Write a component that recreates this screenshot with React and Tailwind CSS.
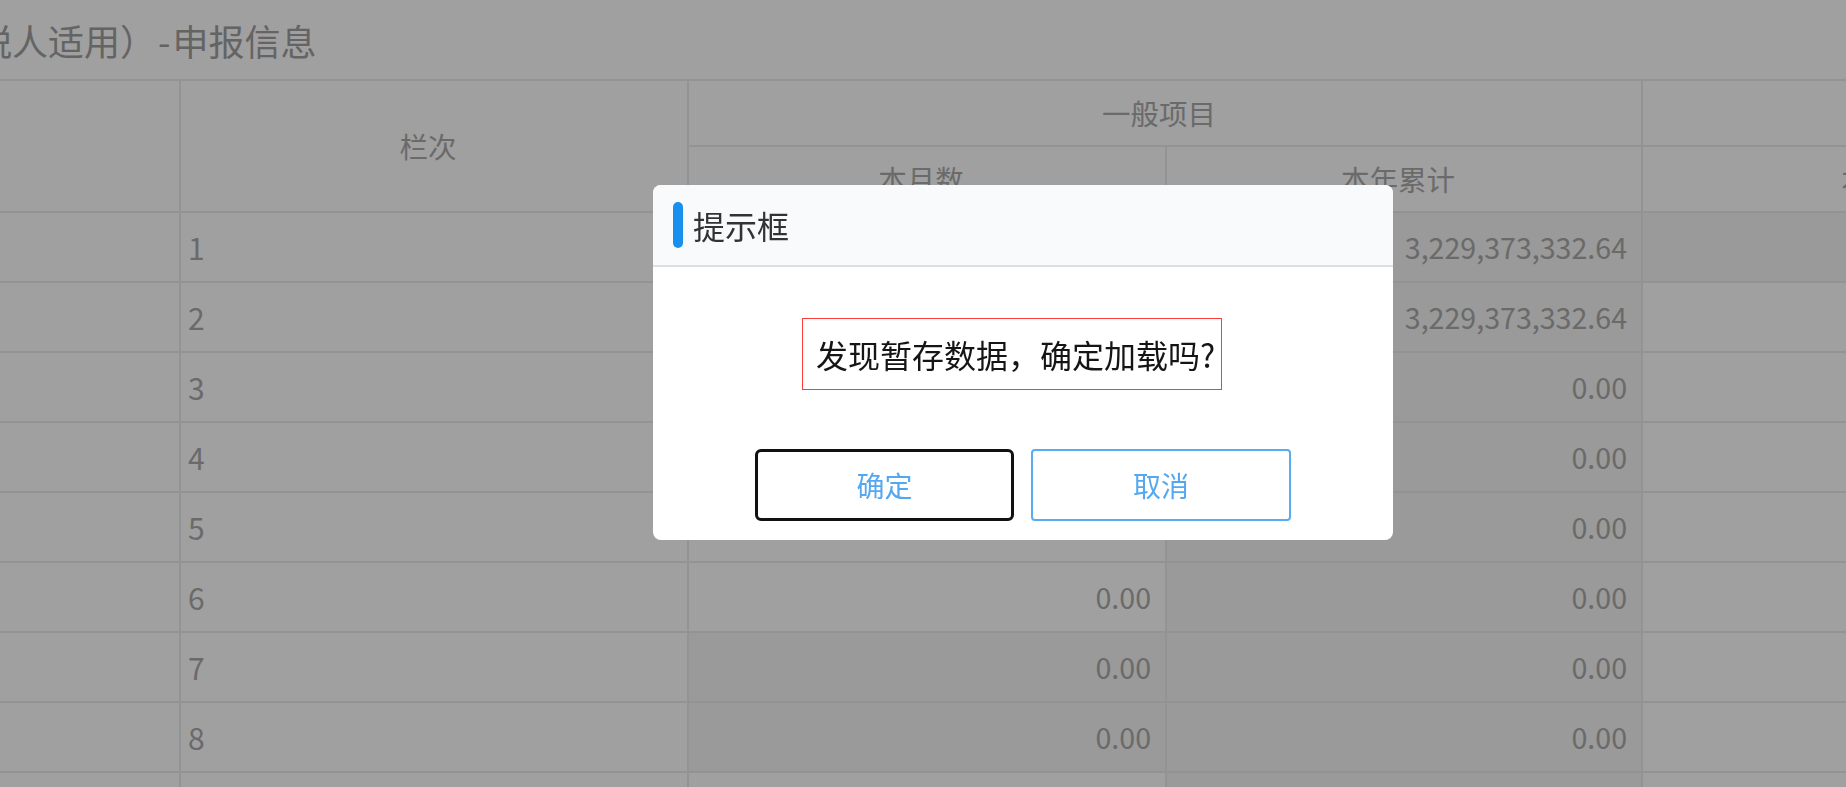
import React from 'react';

const rows = [
  { no: 1, a: '3,229,373,332.64', b: '3,229,373,332.64', aDark: false, bDark: true, cDark: true },
  { no: 2, a: '3,229,373,332.64', b: '3,229,373,332.64', aDark: false, bDark: true, cDark: false },
  { no: 3, a: '0.00', b: '0.00', aDark: false, bDark: true, cDark: false },
  { no: 4, a: '0.00', b: '0.00', aDark: false, bDark: true, cDark: false },
  { no: 5, a: '0.00', b: '0.00', aDark: false, bDark: true, cDark: false },
  { no: 6, a: '0.00', b: '0.00', aDark: false, bDark: true, cDark: false },
  { no: 7, a: '0.00', b: '0.00', aDark: true, bDark: true, cDark: false },
  { no: 8, a: '0.00', b: '0.00', aDark: true, bDark: true, cDark: false },
  { no: 9, a: '', b: '', aDark: false, bDark: true, cDark: false },
];

const NumCell = ({ value, dark }) => (
  <div
    className={`flex items-center justify-end pr-[14px] text-[28.6px] text-[#aaaaaa] ${
      dark ? 'bg-[#f5f5f5]' : 'bg-white'
    }`}
  >
    {value}
  </div>
);

const headCell = 'bg-white flex items-center justify-center pr-[12px] text-[28.5px] text-[#aaaaaa]';

const App = () => {
  return (
    <div className="relative w-full h-screen overflow-hidden bg-white font-['Noto_Sans_CJK_SC',sans-serif]">
      {/* page, scrolled horizontally */}
      <div className="-ml-[460px] w-max">
        <div className="h-[79px] flex items-center pl-[4px] text-[36px] text-[#a0a0a0] whitespace-nowrap">
          增值税纳税申报表（一般纳税人适用）<span className="px-[2px]">-</span>申报信息
        </div>

        <div className="grid grid-cols-[639px_506px_476px_474px_494px] grid-rows-[64px_64px_repeat(9,68px)] gap-[2px] pt-[2px] bg-[#ebebeb]">
          {/* header */}
          <div className="row-span-2 bg-white" />
          <div className={`row-span-2 ${headCell}`}>栏次</div>
          <div className={`col-span-2 ${headCell}`}>一般项目</div>
          <div className="bg-white" />
          <div className={headCell}>本月数</div>
          <div className={headCell}>本年累计</div>
          <div className={headCell}>本月数</div>

          {/* body */}
          {rows.map((r) => (
            <React.Fragment key={r.no}>
              <div className="bg-white" />
              <div className="bg-white flex items-center pl-[7px] text-[30px] text-[#aaaaaa]">
                {r.no < 9 ? r.no : ''}
              </div>
              <NumCell value={r.a} dark={r.aDark} />
              <NumCell value={r.b} dark={r.bDark} />
              <div className={r.cDark ? 'bg-[#f5f5f5]' : 'bg-white'} />
            </React.Fragment>
          ))}
        </div>
      </div>

      {/* modal */}
      <div className="fixed inset-0 bg-[rgba(0,0,0,0.373)]">
        <div className="absolute left-[653px] top-[185px] w-[740px] h-[355px] bg-white rounded-[8px] overflow-hidden flex flex-col">
          <div className="h-[82px] shrink-0 bg-[#f9fafc] border-b-2 border-[#dedede] flex items-center pl-[20px] gap-[10px]">
            <span className="w-[10px] h-[46px] rounded-full bg-[#1890f0]" />
            <span className="text-[32px] text-[#333333] leading-none">提示框</span>
          </div>

          <div className="pl-[149px] pt-[51px]">
            <div className="w-[420px] h-[72px] border border-[#ff3b3b] flex items-center pl-[13px] text-[32px] text-[#151515] whitespace-nowrap">
              发现暂存数据，确定加载吗?
            </div>
          </div>

          <div className="mt-[59px] flex justify-center gap-[17px]">
            <button className="w-[259px] h-[72px] border-[3px] border-[#111111] rounded-[6px] bg-white text-[28px] text-[#55a8f0]">
              确定
            </button>
            <button className="w-[260px] h-[72px] border-2 border-[#5aabf0] rounded-[4px] bg-white text-[28px] text-[#55a8f0]">
              取消
            </button>
          </div>
        </div>
      </div>
    </div>
  );
};

export default App;
